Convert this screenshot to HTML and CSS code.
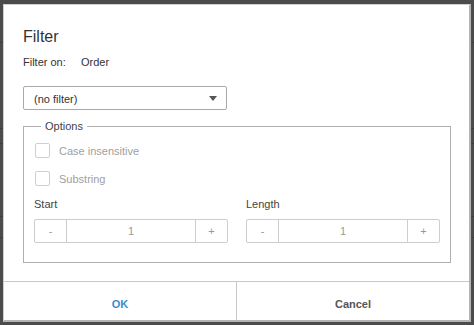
FILE: index.html
```html
<!DOCTYPE html>
<html lang="en">
<head>
    <meta charset="UTF-8">
    <title>Filter</title>
    <link rel="stylesheet" href="styles.css">
</head>
<body>
    <div class="backdrop">
        <div class="row row-a"></div>
        <div class="row row-b"></div>
        <div class="row row-c"></div>
        <div class="row row-d"></div>
        <div class="row row-e"></div>
    </div>

    <div class="dialog">
        <div class="dialog-body">
            <div class="dialog-title">Filter</div>
            <div class="filter-on">
                <span class="filter-on-label">Filter on:</span>
                <span>Order</span>
            </div>

            <div class="select">
                <span>(no filter)</span>
                <span class="select-arrow"></span>
            </div>

            <fieldset class="options">
                <legend>Options</legend>
                <label class="check">
                    <span class="check-box"></span>
                    <span>Case insensitive</span>
                </label>
                <label class="check">
                    <span class="check-box"></span>
                    <span>Substring</span>
                </label>

                <div class="spin-grid">
                    <div class="spin-field">
                        <div class="spin-label">Start</div>
                        <div class="spinner">
                            <div class="spin-btn">-</div>
                            <div class="spin-value">1</div>
                            <div class="spin-btn">+</div>
                        </div>
                    </div>
                    <div class="spin-field">
                        <div class="spin-label">Length</div>
                        <div class="spinner">
                            <div class="spin-btn">-</div>
                            <div class="spin-value">1</div>
                            <div class="spin-btn">+</div>
                        </div>
                    </div>
                </div>
            </fieldset>
        </div>

        <div class="dialog-footer">
            <div class="footer-btn ok">OK</div>
            <div class="footer-btn cancel">Cancel</div>
        </div>
    </div>
</body>
</html>
```

FILE: styles.css
```css
* {
    box-sizing: border-box;
}

body {
    margin: 0;
    width: 474px;
    height: 325px;
    background: #4b4b4b;
    font-family: 'Liberation Sans', Arial, sans-serif;
    color: #333;
    overflow: hidden;
    position: relative;
}

/* dimmed page behind the modal */
.backdrop {
    height: 100%;
}

.row {
    border-bottom: 1px solid #3d3d3d;
}

.row-a { height: 43px; }
.row-b { height: 86px; }
.row-c { height: 15px; }
.row-d { height: 73px; }
.row-e { height: 21px; }

.dialog {
    position: absolute;
    left: 3px;
    top: 4px;
    width: 468px;
    height: 318px;
    background: #fff;
    border: 1px solid #d0d0d0;
    border-right: 2px solid #b4b4b4;
    border-bottom: 2px solid #b4b4b4;
    display: flex;
    flex-direction: column;
}

.dialog-body {
    flex: 1;
    padding: 22px 19px 0 19px;
}

.dialog-title {
    font-size: 16px;
    line-height: 19px;
    color: #333;
}

.filter-on {
    margin-top: 10px;
    font-size: 11px;
    line-height: 13px;
    display: flex;
}

.filter-on-label {
    width: 58px;
}

.select {
    margin-top: 17px;
    width: 204px;
    height: 24px;
    border: 1px solid #a9a9a9;
    border-radius: 2px;
    padding: 1px 9px 0 10px;
    display: flex;
    align-items: center;
    justify-content: space-between;
    font-size: 11px;
}

.select-arrow {
    width: 0;
    height: 0;
    border-left: 4.5px solid transparent;
    border-right: 4.5px solid transparent;
    border-top: 5px solid #555;
}

.options {
    margin: 10px 0 0 0;
    width: 428px;
    border: 1px solid #b0b0b0;
    padding: 0 10px 19px 10px;
    min-width: 0;
}

.options legend {
    font-size: 11px;
    line-height: 13px;
    color: #444;
    padding: 0 4px;
    margin-left: 7px;
}

.check {
    display: flex;
    align-items: center;
    margin-top: 11px;
    font-size: 11px;
    color: #a0a0a0;
    height: 15px;
}

.check:first-of-type {
    margin-top: 10px;
}

.check + .check {
    margin-top: 13px;
}

.check-box {
    width: 15px;
    height: 15px;
    border: 1px solid #cfcfcf;
    border-radius: 2px;
    margin: 0 9px 0 1px;
}

.spin-grid {
    margin-top: 12px;
    display: grid;
    grid-template-columns: 194px 194px;
    column-gap: 18px;
}

.spin-label {
    font-size: 11px;
    line-height: 13px;
    color: #444;
    margin-bottom: 8px;
}

.spinner {
    display: flex;
    height: 24px;
    border: 1px solid #cdcdcd;
    border-radius: 2px;
    font-size: 11px;
    color: #999;
}

.spin-btn {
    width: 31px;
    display: flex;
    align-items: center;
    justify-content: center;
}

.spin-value {
    flex: 1;
    display: flex;
    align-items: center;
    justify-content: center;
    border-left: 1px solid #cdcdcd;
    border-right: 1px solid #cdcdcd;
}

.dialog-footer {
    height: 39px;
    border-top: 1px solid #c8c8c8;
    display: flex;
}

.footer-btn {
    flex: 1;
    display: flex;
    align-items: center;
    justify-content: center;
    padding-top: 5px;
    font-size: 11px;
    font-weight: bold;
}

.ok {
    color: #3b8dcc;
    border-right: 1px solid #c8c8c8;
}

.cancel {
    color: #555;
}
```
